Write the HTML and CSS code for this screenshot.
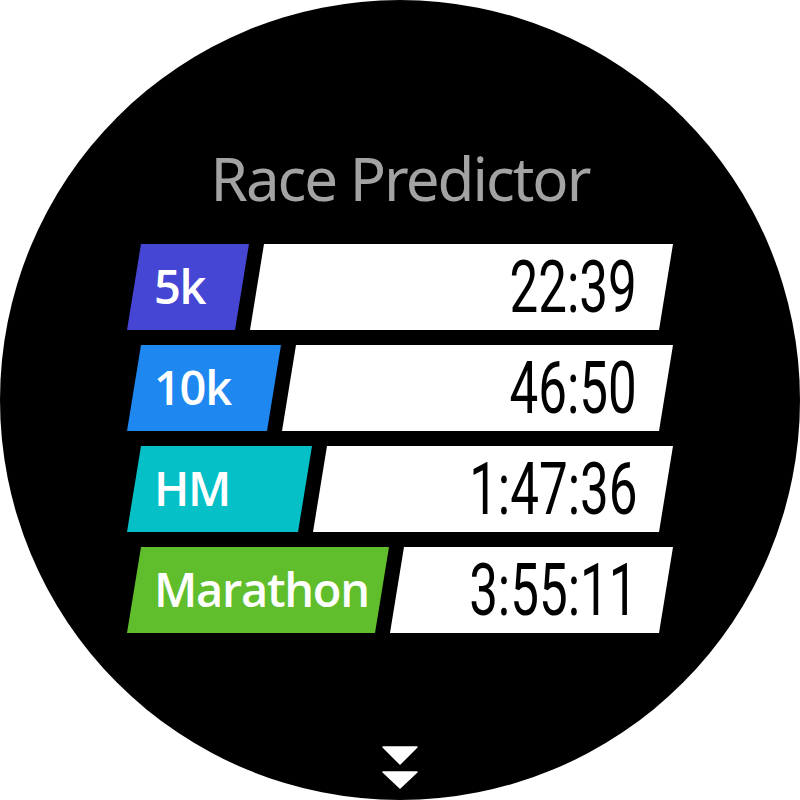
FILE: index.html
```html
<!DOCTYPE html>
<html lang="en">
<head>
<meta charset="utf-8">
<title>Race Predictor</title>
<link rel="stylesheet" href="styles.css">
</head>
<body>
<div class="watch">
  <h1 class="title">Race Predictor</h1>
  <div class="rows">
    <div class="row">
      <div class="label label-5k">5k</div>
      <div class="time"><span class="digits">22:39</span></div>
    </div>
    <div class="row">
      <div class="label label-10k">10k</div>
      <div class="time"><span class="digits">46:50</span></div>
    </div>
    <div class="row">
      <div class="label label-hm">HM</div>
      <div class="time"><span class="digits">1:47:36</span></div>
    </div>
    <div class="row">
      <div class="label label-marathon">Marathon</div>
      <div class="time"><span class="digits">3:55:11</span></div>
    </div>
  </div>
  <svg class="more" width="36" height="43" viewBox="0 0 36 43" aria-hidden="true">
    <polygon points="1,1 35,1 18,18" fill="#fff" stroke="#fff" stroke-width="1.5" stroke-linejoin="round"/>
    <polygon points="1,26 35,26 18,42" fill="#fff" stroke="#fff" stroke-width="1.5" stroke-linejoin="round"/>
  </svg>
</div>
</body>
</html>
```

FILE: styles.css
```css
html, body {
  margin: 0;
  padding: 0;
  background: #fff;
}

.watch {
  width: 800px;
  height: 800px;
  border-radius: 50%;
  background: #000;
  display: flex;
  flex-direction: column;
  align-items: center;
  box-sizing: border-box;
  padding-top: 148px;
  overflow: hidden;
}

.title {
  margin: 0;
  font-family: "Noto Sans", "Open Sans", sans-serif;
  font-weight: 400;
  font-size: 60px;
  line-height: 60px;
  letter-spacing: -2px;
  color: #a3a3a3;
}

.rows {
  margin-top: 36px;
  width: 546px;
  display: flex;
  flex-direction: column;
  gap: 15px;
}

.row {
  display: flex;
  height: 86px;
  gap: 1px;
}

.label,
.time {
  clip-path: polygon(14px 0, 100% 0, calc(100% - 14px) 100%, 0 100%);
  display: flex;
  align-items: center;
  box-sizing: border-box;
}

.label {
  flex: none;
  padding-left: 27px;
  padding-bottom: 2px;
  font-family: "Open Sans", "Noto Sans", sans-serif;
  font-weight: 600;
  font-size: 47px;
  letter-spacing: -1.3px;
  color: #fff;
}

.label-5k { width: 122px; background: #4646d4; }
.label-10k { width: 154px; background: #1e88f0; }
.label-hm { width: 185px; background: #06c0c8; }
.label-marathon { width: 262px; background: #60be2c; }

.time {
  flex: 1;
  background: #fff;
  justify-content: flex-end;
  padding-right: 36px;
  color: #000;
}

.digits {
  display: block;
  font-family: Roboto, "Liberation Sans", sans-serif;
  font-weight: 400;
  font-size: 73px;
  line-height: 1;
  transform: scaleX(0.7);
  transform-origin: right center;
  white-space: nowrap;
}

.more {
  display: block;
  margin-top: 113px;
}
```
